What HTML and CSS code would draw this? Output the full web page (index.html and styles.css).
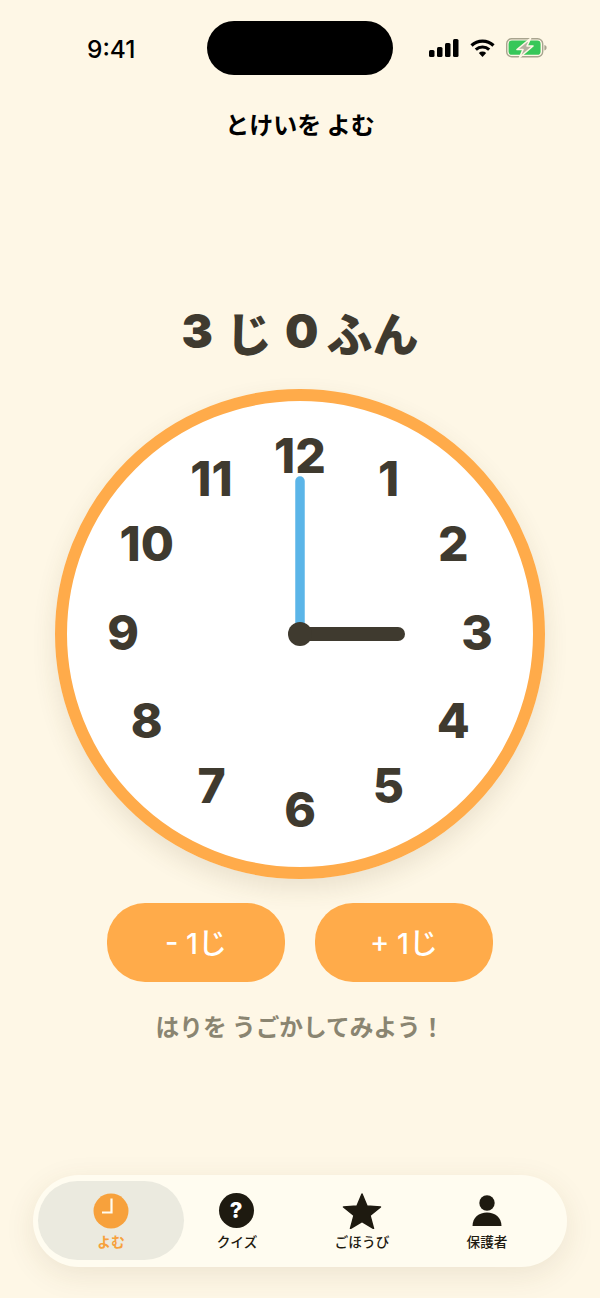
FILE: index.html
```html
<!DOCTYPE html>
<html lang="ja">
<head>
    <meta charset="utf-8" />
    <title>とけいを よむ</title>
    <meta name="viewport" content="width=device-width, initial-scale=1" />
    <link rel="stylesheet" href="styles.css">
</head>
<body>
<div class="screen">
    <header class="statusbar">
        <span class="time">9:41</span>
        <div class="island"></div>
        <div class="status-icons">
            <svg class="signal" width="30" height="18" viewBox="0 0 30 18">
                <rect x="0" y="11" width="5.5" height="7" rx="1.5"/>
                <rect x="8" y="8" width="5.5" height="10" rx="1.5"/>
                <rect x="16" y="4" width="5.5" height="14" rx="1.5"/>
                <rect x="24" y="0" width="5.5" height="18" rx="1.5"/>
            </svg>
            <svg class="wifi" width="25" height="18" viewBox="0 0 25 18">
                <path d="M1.5 6.5 A16 16 0 0 1 23.5 6.5" fill="none" stroke="#000" stroke-width="3.2"/>
                <path d="M5.8 10.6 A10 10 0 0 1 19.2 10.6" fill="none" stroke="#000" stroke-width="3.2"/>
                <path d="M8.8 14 L12.5 18 L16.2 14 A5.4 5.4 0 0 0 8.8 14 Z" fill="#000"/>
            </svg>
            <svg class="battery" width="41" height="20" viewBox="0 0 41 20">
                <rect x="0.7" y="0.7" width="36" height="18" rx="5" fill="none" stroke="#a8a48f" stroke-width="1.4"/>
                <rect x="2.6" y="2.6" width="32" height="14.2" rx="3.4" fill="#37c759"/>
                <path d="M38.4 7 C40 7.4 40.6 8.6 40.6 9.7 C40.6 10.8 40 12 38.4 12.4 Z" fill="#a8a48f"/>
                <path d="M24.5 0.5 L11 11.5 H17 L13.5 19.5 L27 8 H21 Z" fill="#b5b1a0" stroke="#fef7e6" stroke-width="1.6" stroke-linejoin="round"/>
            </svg>
        </div>
    </header>

    <h1 class="page-title">とけいを よむ</h1>

    <main class="content">
        <h2 class="time-label"><span class="digit">3</span>じ<span class="digit">0</span>ふん</h2>

        <div class="clock">
            <svg class="clock-face" width="490" height="490" viewBox="-245 -245 490 490">
                <circle r="239" fill="#fff" stroke="#ffab4a" stroke-width="12"/>
                <text x="0" y="-179">12</text>
                <text x="88.5" y="-155.3">1</text>
                <text x="153.3" y="-90.5">2</text>
                <text x="177" y="-2">3</text>
                <text x="153.3" y="86.5">4</text>
                <text x="88.5" y="151.3">5</text>
                <text x="0" y="175">6</text>
                <text x="-88.5" y="151.3">7</text>
                <text x="-153.3" y="86.5">8</text>
                <text x="-177" y="-2">9</text>
                <text x="-153.3" y="-90.5">10</text>
                <text x="-88.5" y="-155.3">11</text>
                <line x1="0" y1="0" x2="0" y2="-153" stroke="#5bb5e8" stroke-width="9.5" stroke-linecap="round"/>
                <line x1="0" y1="0" x2="98" y2="0" stroke="#3f3a2f" stroke-width="14" stroke-linecap="round"/>
                <circle r="12" fill="#3f3a2f"/>
            </svg>
        </div>

        <div class="buttons">
            <button class="step-btn">- 1じ</button>
            <button class="step-btn">+ 1じ</button>
        </div>

        <p class="hint">はりを うごかしてみよう！</p>
    </main>

    <nav class="tabbar">
        <a class="tab active" href="#">
            <svg width="36" height="36" viewBox="0 0 36 36">
                <circle cx="18" cy="18" r="17.5" fill="#f7a13c"/>
                <path d="M18.5 5.5 V19.5 H9" fill="none" stroke="#fffcf0" stroke-width="2.2"/>
            </svg>
            <span>よむ</span>
        </a>
        <a class="tab" href="#">
            <span class="quiz-icon">?</span>
            <span>クイズ</span>
        </a>
        <a class="tab" href="#">
            <svg width="40" height="36" viewBox="0 0 40 36">
                <path d="M20 1 L25 13 L38.5 14 L28 22.5 L31.5 35.5 L20 28.5 L8.5 35.5 L12 22.5 L1.5 14 L15 13 Z" fill="#1e1a10" stroke="#1e1a10" stroke-width="1.5" stroke-linejoin="round"/>
            </svg>
            <span>ごほうび</span>
        </a>
        <a class="tab" href="#">
            <svg width="36" height="36" viewBox="0 0 36 36">
                <circle cx="18" cy="10" r="7.7" fill="#1e1a10"/>
                <path d="M3.5 33 C3.5 24.5 10 19.5 18 19.5 C26 19.5 32.5 24.5 32.5 33 Z" fill="#1e1a10"/>
            </svg>
            <span>保護者</span>
        </a>
    </nav>
</div>
</body>
</html>
```

FILE: styles.css
```css
* {
    box-sizing: border-box;
}

body {
    margin: 0;
    background: #fef7e6;
    font-family: "Noto Sans CJK JP", "Noto Sans", sans-serif;
    color: #1e1a10;
}

.screen {
    height: 1298px;
    display: flex;
    flex-direction: column;
    overflow: hidden;
}

/* status bar */
.statusbar {
    height: 75px;
    padding-top: 21px;
    display: grid;
    grid-template-columns: 207px 186px 207px;
}

.time {
    font: 550 24.5px "Inter", sans-serif;
    color: #000;
    padding-left: 87px;
    padding-top: 13px;
}

.island {
    height: 54px;
    background: #000;
    border-radius: 27px;
}

.status-icons {
    display: flex;
    align-items: center;
    gap: 11px;
    padding-left: 36px;
    height: 54px;
}

.page-title {
    margin: 31px 0 0;
    font-size: 24px;
    font-weight: 700;
    line-height: 36px;
    text-align: center;
    color: #000;
}

/* main clock area */
.content {
    display: flex;
    flex-direction: column;
    align-items: center;
}

.time-label {
    margin: 159px 0 0;
    font-size: 46px;
    font-weight: 900;
    line-height: 60px;
    color: #3f3a2f;
    display: flex;
    align-items: center;
}

.time-label .digit {
    font-family: "Inter", sans-serif;
    font-size: 47px;
    margin: 0 13px 0 0;
}

.time-label .digit:nth-child(2) {
    margin-left: 13px;
    margin-right: 8px;
}

.clock {
    margin-top: 28px;
    width: 490px;
    height: 490px;
    border-radius: 50%;
    box-shadow: 0 10px 24px rgba(90, 70, 30, 0.12);
}

.clock-face {
    display: block;
}

.clock-face text {
    font-family: "Inter", sans-serif;
    font-size: 48px;
    font-weight: 850;
    fill: #3f3a2f;
    text-anchor: middle;
    dominant-baseline: central;
}

.buttons {
    margin-top: 24px;
    display: flex;
    gap: 30px;
}

.step-btn {
    width: 178px;
    height: 79px;
    border: 0;
    border-radius: 38px;
    background: #ffab4a;
    color: #fff;
    font-family: "Inter", "Noto Sans CJK JP", sans-serif;
    font-size: 29px;
    font-weight: 500;
    padding-bottom: 4px;
}

.hint {
    margin: 28px 0 0;
    font-size: 23.7px;
    font-weight: 700;
    line-height: 32px;
    color: #8a8571;
}

/* bottom tabs */
.tabbar {
    margin: auto 33px 31px;
    height: 92px;
    padding: 6px 5px 7px;
    display: flex;
    gap: 19px;
    background: #fffcf0;
    border-radius: 46px;
    box-shadow: 0 8px 30px rgba(90, 70, 30, 0.1);
}

.tab {
    width: 106px;
    display: flex;
    flex-direction: column;
    align-items: center;
    padding-top: 12px;
    text-decoration: none;
    color: #1e1a10;
    font-size: 13.7px;
    font-weight: 500;
    line-height: 18px;
}

.tab svg {
    display: block;
    margin-bottom: 3px;
}

.tab.active {
    width: 146px;
    margin-right: -19px;
    background: #ebeadf;
    border-radius: 40px;
    color: #f7a13c;
    font-weight: 700;
}

.quiz-icon {
    width: 35px;
    height: 35px;
    margin-bottom: 4px;
    margin-right: 2px;
    border-radius: 50%;
    background: #1e1a10;
    color: #fff;
    font: 800 22px/35px "Inter", sans-serif;
    text-align: center;
}
```
